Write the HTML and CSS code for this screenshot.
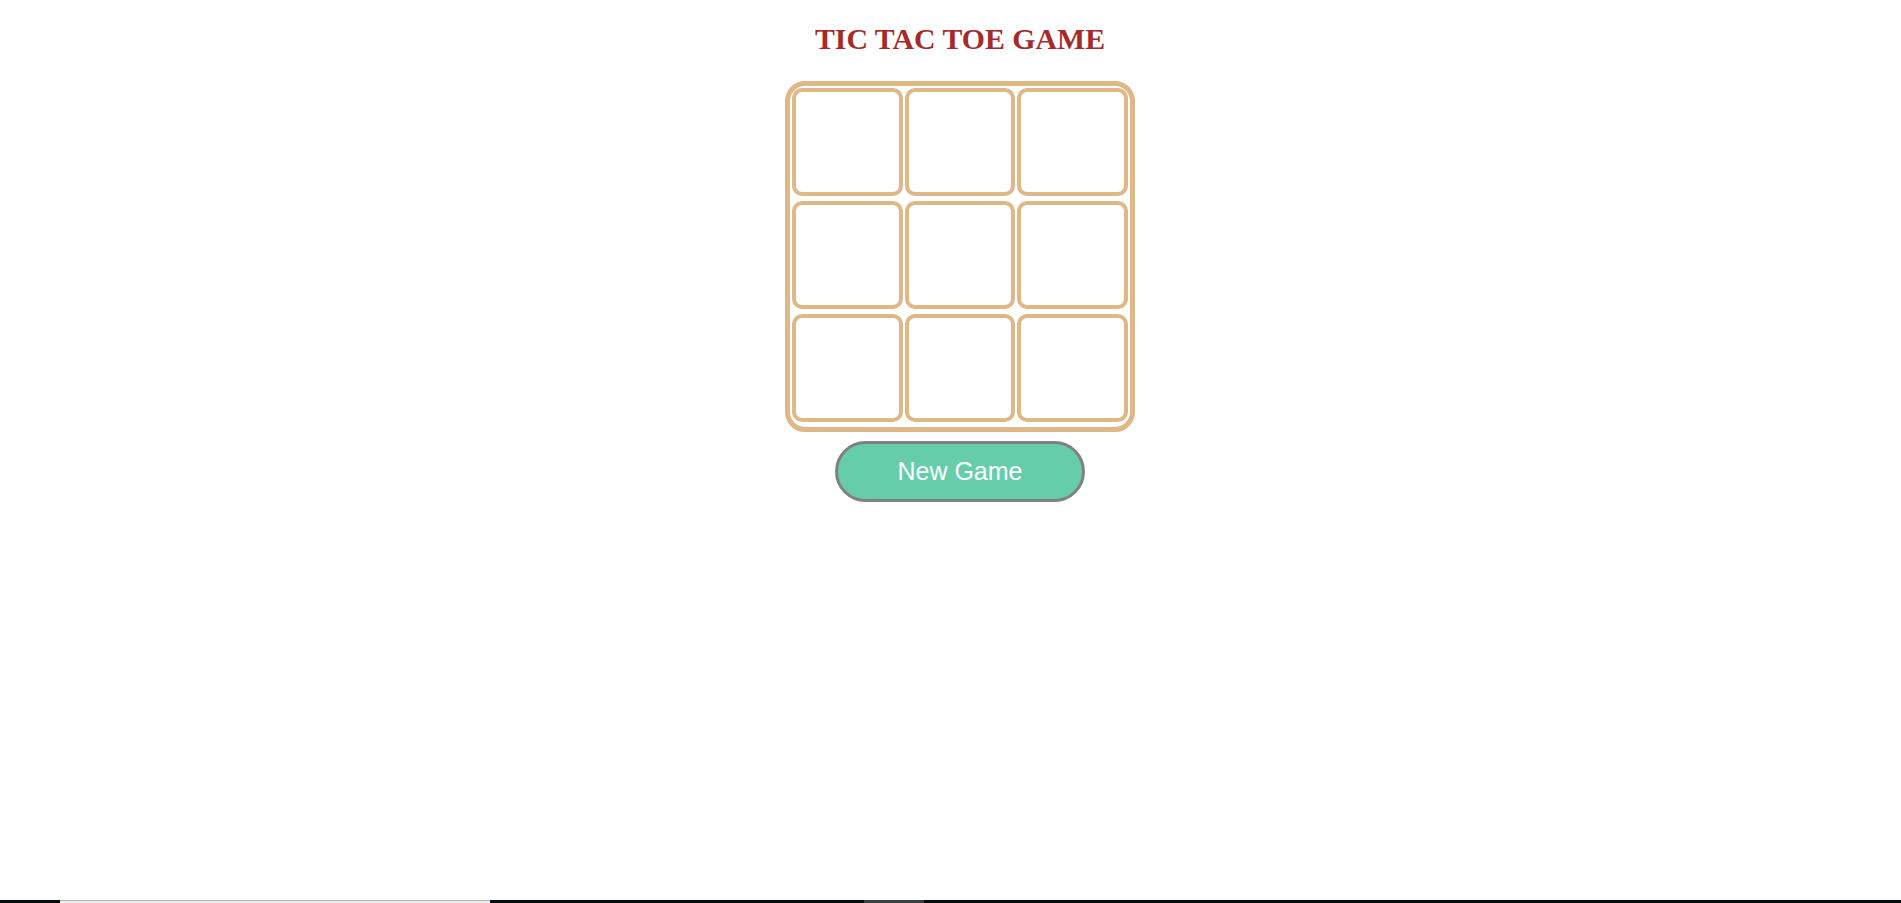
FILE: index.html
```html
<!DOCTYPE html>
<html>
<head>
<meta charset="utf-8">
<title>Tic Tac Toe</title>
<link rel="stylesheet" href="styles.css">
</head>
<body>
<main class="game">
  <h1 class="title">TIC TAC TOE GAME</h1>
  <div class="board">
    <div class="cell"></div>
    <div class="cell"></div>
    <div class="cell"></div>
    <div class="cell"></div>
    <div class="cell"></div>
    <div class="cell"></div>
    <div class="cell"></div>
    <div class="cell"></div>
    <div class="cell"></div>
  </div>
  <button class="new-game">New Game</button>
</main>
<div class="strip">
  <span class="seg seg-dark seg-a"></span>
  <span class="seg seg-light seg-b"></span>
  <span class="seg seg-dark seg-c"></span>
  <span class="seg seg-grey seg-d"></span>
  <span class="seg seg-dark seg-e"></span>
</div>
</body>
</html>
```

FILE: styles.css
```css
html, body {
  margin: 0;
  padding: 0;
  background: #ffffff;
}

body {
  min-height: 100vh;
  display: flex;
  flex-direction: column;
}

.game {
  flex: 1;
  display: flex;
  flex-direction: column;
  align-items: center;
  padding-left: 19px;
}

.title {
  margin: 22px 0 25px;
  font-family: "Liberation Serif", "Times New Roman", serif;
  font-weight: bold;
  font-size: 29.8px;
  line-height: 34px;
  color: #a52a2a;
}

.board {
  box-sizing: border-box;
  width: 350px;
  height: 351px;
  border: 5px solid #deb887;
  border-radius: 20px;
  padding: 2px;
  display: grid;
  grid-template-columns: repeat(3, 1fr);
  grid-template-rows: repeat(3, 108px);
  align-content: start;
  column-gap: 2px;
  row-gap: 5px;
}

.cell {
  border: 4px solid #deb887;
  border-radius: 10px;
}

.new-game {
  box-sizing: border-box;
  margin-top: 9px;
  width: 250px;
  height: 61px;
  border: 3px solid #808080;
  border-radius: 31px;
  background: #66cdaa;
  color: #ffffff;
  font-family: "Liberation Sans", Arial, sans-serif;
  font-size: 25px;
  padding: 0;
}

.strip {
  display: flex;
  height: 3px;
}

.seg { display: block; height: 3px; }
.seg-dark { background: #050a10; }
.seg-light { background: linear-gradient(#b4b4b4 0 1px, #ececec 1px); }
.seg-grey { background: #3b4046; }
.seg-a { width: 60px; }
.seg-b { width: 430px; }
.seg-c { width: 374px; }
.seg-d { width: 60px; }
.seg-e { flex: 1; }
```
